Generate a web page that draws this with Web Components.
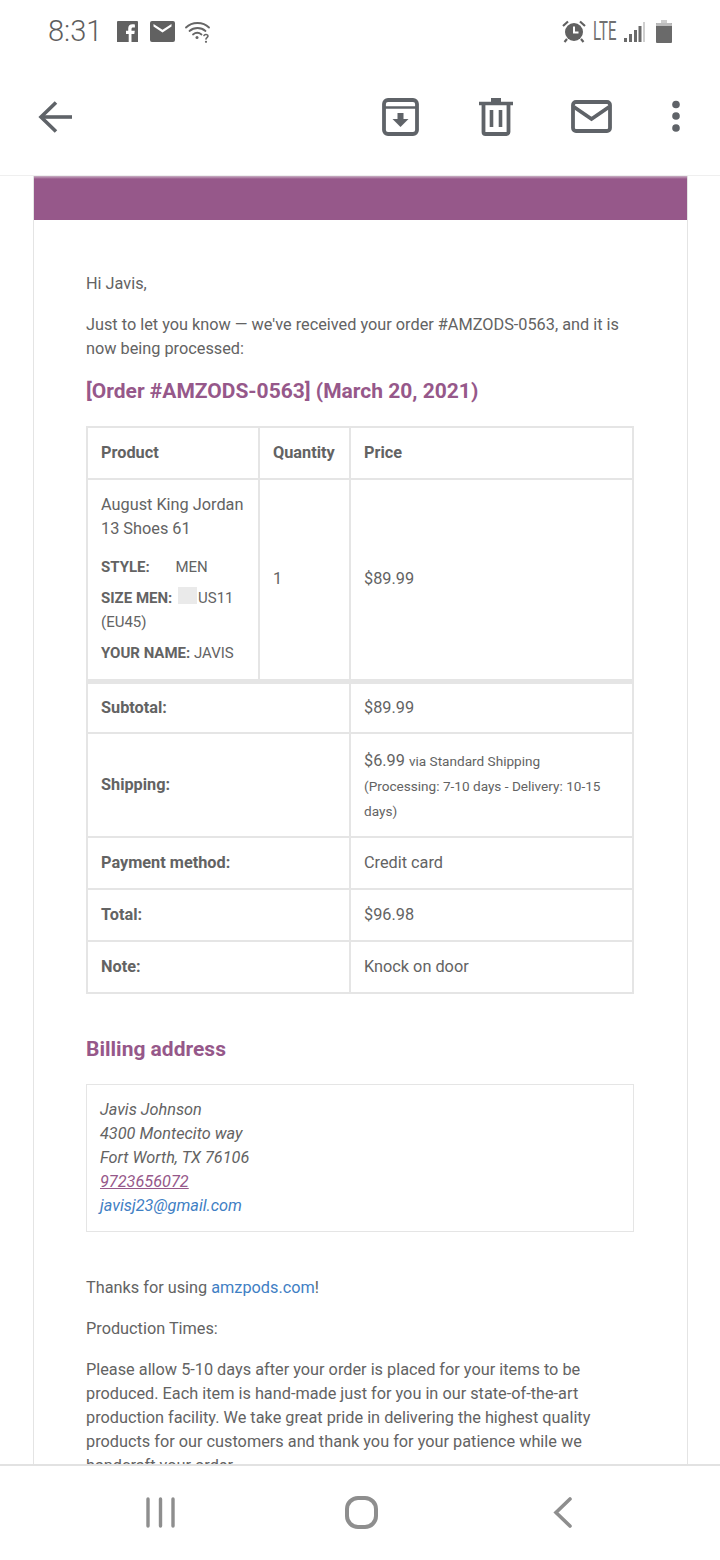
<!DOCTYPE html>
<html lang="en">
<head>
<meta charset="UTF-8">
<title>Order email</title>
<style>
html, body { margin: 0; padding: 0; background: #fff; }
body { width: 720px; height: 1560px; overflow: hidden; font-family: Roboto, "Liberation Sans", sans-serif; display: flex; flex-direction: column; }
</style>
</head>
<body>
<status-bar></status-bar>
<mail-toolbar></mail-toolbar>
<mail-viewport>
  <email-card>
    <p>Hi Javis,</p>
    <p>Just to let you know — we've received your order #AMZODS-0563, and it is now being processed:</p>
    <section-title class="order">[Order #AMZODS-0563] (March 20, 2021)</section-title>
    <order-table></order-table>
    <section-title class="billing">Billing address</section-title>
    <billing-box>
      Javis Johnson<br>4300 Montecito way<br>Fort Worth, TX 76106<br>
      <a href="#" style="color:#96588a">9723656072</a><br>
      <a href="#" style="color:#3f80c4;text-decoration:none">javisj23@gmail.com</a>
    </billing-box>
    <p>Thanks for using <a href="#" style="color:#3f80c4;text-decoration:none">amzpods.com</a>!</p>
    <p>Production Times:</p>
    <p>Please allow 5-10 days after your order is placed for your items to be produced. Each item is hand-made just for you in our state-of-the-art production facility. We take great pride in delivering the highest quality products for our customers and thank you for your patience while we handcraft your order.</p>
  </email-card>
</mail-viewport>
<nav-bar></nav-bar>

<script>
function defineEl(name, html) {
  customElements.define(name, class extends HTMLElement {
    constructor() {
      super();
      this.attachShadow({ mode: 'open' }).innerHTML = html;
    }
  });
}

defineEl('status-bar', `
<style>
:host { display: flex; align-items: center; height: 62px; padding: 0 48px; box-sizing: border-box; color: #666; flex: none; }
.time { font: 300 29px/1 Roboto, sans-serif; width: 69px; color: #5e5e5e; }
svg { display: block; flex: none; }
.lte { font: 400 25px/1 Roboto, sans-serif; transform: scaleX(.6); transform-origin: left center; width: 31px; color: #707070; }
.sp { flex: 1; }
</style>
<span class="time">8:31</span>
<svg width="21" height="21" viewBox="0 0 21 21" style="margin-right:12px"><path fill="#616161" d="M1 0h19a1 1 0 0 1 1 1v20h-6.500v-8h2.800l.5-3.200h-3.300V8c0-1 .4-1.600 1.700-1.600h1.700V3.500c-.6-.1-1.500-.2-2.500-.2-2.600 0-4.200 1.500-4.200 4.200v2.300H9V13h2.700v8H0V1a1 1 0 0 1 1-1z"/></svg>
<svg width="25" height="21" viewBox="0 0 25 21" style="margin-right:10px"><path fill="#616161" d="M2 0h21a2 2 0 0 1 2 2v17a2 2 0 0 1-2 2H2a2 2 0 0 1-2-2V2a2 2 0 0 1 2-2zm1.500 5.500 9 6 9-6v-2.500l-9 5.800-9-5.800z"/></svg>
<svg width="26" height="23" viewBox="0 0 26 23" fill="none" stroke="#666" stroke-width="1.800" stroke-linecap="round"><path d="M1 7.500C7 1.500 18 1.500 24 7.500"/><path d="M4.500 11C9 7 16 7 20.500 11"/><path d="M8 14.500c2.500-2 6-2 8.500 0"/><circle cx="12" cy="17.500" r="1.500" fill="#666" stroke="none"/><path stroke-width="1.600" d="M19 15.500c.5-1.500 4-1.500 4 .6 0 1.500-2 1.400-2 3"/><circle cx="21" cy="21.800" r="1.100" fill="#666" stroke="none"/></svg>
<span class="sp"></span>
<svg width="24" height="23" viewBox="0 0 24 23" style="margin-right:7px"><circle cx="12" cy="12" r="9" fill="#616161"/><path d="M12 6.500V12.500h4.500" fill="none" stroke="#fff" stroke-width="2"/><path d="M1 6 6 1.500M23 6 18 1.500M5 19l-2.500 3M19 19l2.500 3" stroke="#616161" stroke-width="2.200" fill="none"/></svg>
<span class="lte">LTE</span>
<svg width="21" height="21" viewBox="0 0 21 21" style="margin-right:11px"><path fill="#6a6a6a" d="M0 17h3v4H0zM5 13h3v8H5zM10 9h3v12h-3zM14.500 5h3v16h-3z"/><path fill="#cfcfcf" d="M19 1h2v20h-2z"/></svg>
<svg width="16" height="23" viewBox="0 0 16 23"><path fill="#cdcdcd" d="M5 0h6v3h-6z"/><path fill="#6a6a6a" d="M1 3h14a1 1 0 0 1 1 1v18a1 1 0 0 1-1 1H1a1 1 0 0 1-1-1V4a1 1 0 0 1 1-1z"/><path fill="#bdbdbd" d="M1 3h14a1 1 0 0 1 1 1v2H0V4a1 1 0 0 1 1-1z"/></svg>
`);

defineEl('mail-toolbar', `
<style>
:host { display: flex; align-items: center; height: 114px; box-sizing: border-box; padding: 0 0 4px 38px; flex: none; border-bottom: 1px solid #efefef; }
svg { display: block; flex: none; }
</style>
<svg width="34" height="34" viewBox="0 0 34 34" fill="none" stroke="#5f6368" stroke-width="3.600" style="margin-right:310px"><path d="M34 17H3"/><path d="M18 2.500 3 17l15 14.500"/></svg>
<svg width="37" height="38" viewBox="0 0 37 38" fill="none" stroke="#5f6368" stroke-width="3.800" style="margin-right:60px"><rect x="2" y="2" width="33" height="34" rx="4"/><path d="M2 9.500h33" stroke-width="2.600"/><path fill="#5f6368" stroke="none" d="M15.500 15h6v6h5L18.500 29 10.500 21h5z"/></svg>
<svg width="34" height="38" viewBox="0 0 34 38" fill="none" stroke="#5f6368" style="margin-right:58px"><path stroke-width="3.800" d="M4.500 7v27a2 2 0 0 0 2 2h21a2 2 0 0 0 2-2V7"/><path stroke-width="3.600" d="M0 5.500h34"/><path fill="#5f6368" stroke="none" d="M12 0h10v4H12z"/><path stroke-width="3.600" d="M12.500 12v17M21.500 12v17"/></svg>
<svg width="41" height="34" viewBox="0 0 41 34" fill="none" stroke="#5f6368" stroke-width="3.800" style="margin-right:60px"><rect x="2" y="2" width="37" height="29" rx="3"/><path d="M3 7l17.500 12L38 7"/></svg>
<svg width="8" height="34" viewBox="0 0 8 34" fill="#5f6368"><circle cx="4" cy="4.500" r="3.800"/><circle cx="4" cy="16" r="3.800"/><circle cx="4" cy="28" r="3.800"/></svg>
`);

defineEl('mail-viewport', `
<style>
:host { display: block; flex: 1; min-height: 0; overflow: hidden; padding: 0 32px 0 33px; }
</style>
<slot></slot>
`);

defineEl('email-card', `
<style>
:host { display: block; border: 1px solid #e4e4e4; border-top: 0; background: #fff; color: #636363; font: 400 16.300px/24px Roboto, sans-serif; }
.head { height: 44px; background: linear-gradient(#c9b0c4 0, #96588a 3px); }
.body { padding: 52px 52px 40px 52px; width: 548px; }
::slotted(p) { margin: 0 0 17px; }
</style>
<div class="head"></div>
<div class="body"><slot></slot></div>
`);

defineEl('section-title', `
<style>
:host { display: block; color: #96588a; font: 700 21px/26px Roboto, sans-serif; }
:host(.order) { margin: 0 0 22px; }
:host(.billing) { margin: 42px 0 22px; }
</style>
<slot></slot>
`);

defineEl('order-table', `
<style>
:host { display: block; color: #636363; }
table { width: 548px; border-collapse: collapse; table-layout: fixed; font: 400 16.300px/24px Roboto, sans-serif; }
th, td { border: 2px solid #e5e5e5; padding: 0 13px; text-align: left; vertical-align: middle; box-sizing: border-box; }
th { font-weight: 700; }
tr { height: 52px; }
.thick th, .thick td { border-top-width: 5px; }
.product { height: 202px; }
.name { margin-bottom: 14px; }
.meta { font-size: 15px; }
.meta div { margin-bottom: 7px; }
.meta div:last-child { margin: 0; }
.swatch { display: inline-block; width: 19px; height: 17px; background: #eaeaea; vertical-align: -1px; margin: 0 1px 0 2px; }
.ship { height: 104px; }
small { font-size: 13.600px; line-height: 20px; }
.lines { line-height: 25px; }
</style>
<table>
  <colgroup><col style="width:172px"><col style="width:91px"><col></colgroup>
  <tr><th>Product</th><th>Quantity</th><th>Price</th></tr>
  <tr class="product">
    <td>
      <div class="name">August King Jordan 13 Shoes 61</div>
      <div class="meta">
        <div><b>STYLE:</b> <span style="margin-left:22px">MEN</span></div>
        <div><b>SIZE MEN:</b> <span class="swatch"></span>US11<br>(EU45)</div>
        <div><b>YOUR NAME:</b> JAVIS</div>
      </div>
    </td>
    <td>1</td>
    <td>$89.99</td>
  </tr>
  <tr class="thick"><th colspan="2">Subtotal:</th><td>$89.99</td></tr>
  <tr class="ship"><th colspan="2">Shipping:</th><td class="lines">$6.99 <small>via Standard Shipping<br>(Processing: 7-10 days - Delivery: 10-15 days)</small></td></tr>
  <tr><th colspan="2">Payment method:</th><td>Credit card</td></tr>
  <tr><th colspan="2">Total:</th><td>$96.98</td></tr>
  <tr><th colspan="2">Note:</th><td>Knock on door</td></tr>
</table>
`);

defineEl('billing-box', `
<style>
:host { display: block; border: 1px solid #e5e5e5; padding: 13px; font-style: italic; margin-bottom: 44px; }
</style>
<slot></slot>
`);

defineEl('nav-bar', `
<style>
:host { display: flex; align-items: center; height: 96px; box-sizing: border-box; border-top: 2px solid #e2e2e2; background: #fff; flex: none; padding: 0 0 2px 146px; }
svg { display: block; flex: none; }
</style>
<svg width="29" height="31" viewBox="0 0 29 31" stroke="#8e8e8e" stroke-width="3.400" stroke-linecap="round" style="margin-right:170px"><path d="M2 2v27M14.500 2v27M27 2v27"/></svg>
<svg width="33" height="33" viewBox="0 0 33 33" fill="none" stroke="#8e8e8e" stroke-width="4" style="margin-right:175px"><rect x="2" y="2" width="29" height="29" rx="11"/></svg>
<svg width="20" height="31" viewBox="0 0 20 31" fill="none" stroke="#8e8e8e" stroke-width="3.600" stroke-linecap="round"><path d="M17 2 3 15.500 17 29"/></svg>
`);
</script>
</body>
</html>
